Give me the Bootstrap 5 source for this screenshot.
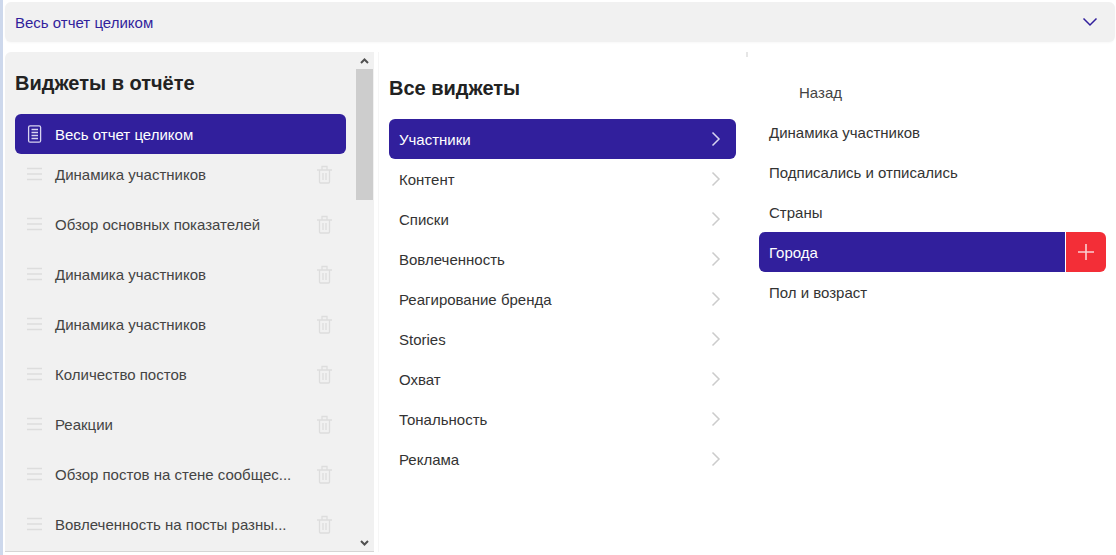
<!DOCTYPE html>
<html lang="ru">
<head>
<meta charset="utf-8">
<title>Виджеты</title>
<link href="https://cdn.jsdelivr.net/npm/bootstrap@5.3.0/dist/css/bootstrap.min.css" rel="stylesheet">
<style>
html,body{height:555px;overflow:hidden;background:#fff}
body{font-family:"Liberation Sans",Arial,sans-serif;font-size:15px;color:#333}
.edge-strip{width:3px;background:#cdd8ec;flex:none}
.page-main{padding:2px 1px 3px 2px;min-width:0}
.top-select{height:40px;background:#f1f1f1;border-radius:6px;padding:0 17px 0 10px;color:#311f9c;box-shadow:0 1px 2px rgba(0,0,0,.03)}
.columns{margin-top:10px;height:500px}
.report-panel{width:369px;flex:none;background:#f1f1f1;border-radius:6px 0 0 0;border-bottom:1px solid #d5d5d5;overflow:hidden}
.report-body{padding:19px 10px 0;min-width:0}
.fake-scroll{width:17px;flex:none;background:#f1f1f1;margin-right:1px}
.fake-arrow{height:17px}
.fake-thumb{height:131px;background:#cdcdcd}
.col-title{font-size:20px;font-weight:700;color:#222;line-height:24px;margin:0}
.report-title{margin-bottom:19px}
.middle-title{margin-bottom:19px}
.report-row{height:40px;margin-bottom:10px;padding:0 13px 0 12px;color:#444}
.report-row.is-active{background:#311f9c;color:#fff;border-radius:6px;margin-bottom:0}
.row-label{margin-left:12px;white-space:nowrap;padding-top:2px}
.row-trash{margin-left:auto}
.row-icon{width:16px;flex:none}
.middle-col{width:370px;flex:none;margin-left:4px;padding:24px 12px 0 10px;border-left:1px solid #f6f6f6}
.right-col{flex:1;padding:20px 9px 0 11px;min-width:0;position:relative}
.right-col::before{content:"";position:absolute;left:-2px;top:0;width:2px;height:5px;background:#e6e6e6}
.pick-row{height:40px;padding:0 15px 0 10px;color:#333;border-radius:6px}
.pick-row.is-active{background:#311f9c;color:#fff}
.pick-text{padding-top:2px}
.back-row{padding-left:40px;color:#444}
.pick-active{border-radius:6px;overflow:hidden;height:40px}
.pick-active .pick-row{flex:1;background:#311f9c;color:#fff;border-radius:0}
.pick-add{width:40px;margin-left:1px;background:#f32e37}
</style>
</head>
<body class="d-flex">
<div class="edge-strip"></div>
<div class="page-main flex-grow-1">
  <div class="top-select d-flex align-items-center justify-content-between">
    <span class="pick-text">Весь отчет целиком</span>
    <svg width="16" height="10" viewBox="0 0 16 10" fill="none" stroke="#311f9c" stroke-width="1.5"><path d="M1.500 1.500 8 8l6.500-6.500"/></svg>
  </div>
  <div class="columns d-flex">
    <div class="report-panel d-flex">
      <div class="report-body flex-grow-1">
        <h2 class="col-title report-title">Виджеты в отчёте</h2>
        <div class="report-row is-active d-flex align-items-center">
          <svg class="row-icon" width="16" height="18" viewBox="0 0 16 18" fill="none" stroke="#d8d4f0" stroke-width="1.300"><rect x="1.600" y="0.800" width="12" height="16.400" rx="1.500"/><path d="M4.500 4.500h6.500M4.500 7.500h6.500M4.500 10.500h6.500M4.500 13.500h6.500"/></svg>
          <span class="row-label">Весь отчет целиком</span>
        </div>
        <div class="report-row d-flex align-items-center"><svg class="row-icon" width="16" height="14" viewBox="0 0 16 14" fill="none" stroke="#ddd" stroke-width="1.600"><path d="M0 1.500h15M0 7h15M0 12.500h15"/></svg><span class="row-label">Динамика участников</span><svg class="row-trash" width="16" height="19" viewBox="0 0 16 19" fill="none" stroke="#ddd" stroke-width="1.300"><path d="M0 5h15M5 5V1.500h5V5M2.500 5v12a1 1 0 0 0 1 1h8a1 1 0 0 0 1-1V5M6 8v7M9 8v7"/></svg></div>
        <div class="report-row d-flex align-items-center"><svg class="row-icon" width="16" height="14" viewBox="0 0 16 14" fill="none" stroke="#ddd" stroke-width="1.600"><path d="M0 1.500h15M0 7h15M0 12.500h15"/></svg><span class="row-label">Обзор основных показателей</span><svg class="row-trash" width="16" height="19" viewBox="0 0 16 19" fill="none" stroke="#ddd" stroke-width="1.300"><path d="M0 5h15M5 5V1.500h5V5M2.500 5v12a1 1 0 0 0 1 1h8a1 1 0 0 0 1-1V5M6 8v7M9 8v7"/></svg></div>
        <div class="report-row d-flex align-items-center"><svg class="row-icon" width="16" height="14" viewBox="0 0 16 14" fill="none" stroke="#ddd" stroke-width="1.600"><path d="M0 1.500h15M0 7h15M0 12.500h15"/></svg><span class="row-label">Динамика участников</span><svg class="row-trash" width="16" height="19" viewBox="0 0 16 19" fill="none" stroke="#ddd" stroke-width="1.300"><path d="M0 5h15M5 5V1.500h5V5M2.500 5v12a1 1 0 0 0 1 1h8a1 1 0 0 0 1-1V5M6 8v7M9 8v7"/></svg></div>
        <div class="report-row d-flex align-items-center"><svg class="row-icon" width="16" height="14" viewBox="0 0 16 14" fill="none" stroke="#ddd" stroke-width="1.600"><path d="M0 1.500h15M0 7h15M0 12.500h15"/></svg><span class="row-label">Динамика участников</span><svg class="row-trash" width="16" height="19" viewBox="0 0 16 19" fill="none" stroke="#ddd" stroke-width="1.300"><path d="M0 5h15M5 5V1.500h5V5M2.500 5v12a1 1 0 0 0 1 1h8a1 1 0 0 0 1-1V5M6 8v7M9 8v7"/></svg></div>
        <div class="report-row d-flex align-items-center"><svg class="row-icon" width="16" height="14" viewBox="0 0 16 14" fill="none" stroke="#ddd" stroke-width="1.600"><path d="M0 1.500h15M0 7h15M0 12.500h15"/></svg><span class="row-label">Количество постов</span><svg class="row-trash" width="16" height="19" viewBox="0 0 16 19" fill="none" stroke="#ddd" stroke-width="1.300"><path d="M0 5h15M5 5V1.500h5V5M2.500 5v12a1 1 0 0 0 1 1h8a1 1 0 0 0 1-1V5M6 8v7M9 8v7"/></svg></div>
        <div class="report-row d-flex align-items-center"><svg class="row-icon" width="16" height="14" viewBox="0 0 16 14" fill="none" stroke="#ddd" stroke-width="1.600"><path d="M0 1.500h15M0 7h15M0 12.500h15"/></svg><span class="row-label">Реакции</span><svg class="row-trash" width="16" height="19" viewBox="0 0 16 19" fill="none" stroke="#ddd" stroke-width="1.300"><path d="M0 5h15M5 5V1.500h5V5M2.500 5v12a1 1 0 0 0 1 1h8a1 1 0 0 0 1-1V5M6 8v7M9 8v7"/></svg></div>
        <div class="report-row d-flex align-items-center"><svg class="row-icon" width="16" height="14" viewBox="0 0 16 14" fill="none" stroke="#ddd" stroke-width="1.600"><path d="M0 1.500h15M0 7h15M0 12.500h15"/></svg><span class="row-label">Обзор постов на стене сообщес...</span><svg class="row-trash" width="16" height="19" viewBox="0 0 16 19" fill="none" stroke="#ddd" stroke-width="1.300"><path d="M0 5h15M5 5V1.500h5V5M2.500 5v12a1 1 0 0 0 1 1h8a1 1 0 0 0 1-1V5M6 8v7M9 8v7"/></svg></div>
        <div class="report-row d-flex align-items-center"><svg class="row-icon" width="16" height="14" viewBox="0 0 16 14" fill="none" stroke="#ddd" stroke-width="1.600"><path d="M0 1.500h15M0 7h15M0 12.500h15"/></svg><span class="row-label">Вовлеченность на посты разны...</span><svg class="row-trash" width="16" height="19" viewBox="0 0 16 19" fill="none" stroke="#ddd" stroke-width="1.300"><path d="M0 5h15M5 5V1.500h5V5M2.500 5v12a1 1 0 0 0 1 1h8a1 1 0 0 0 1-1V5M6 8v7M9 8v7"/></svg></div>
      </div>
      <div class="fake-scroll d-flex flex-column justify-content-start">
        <div class="fake-arrow d-flex align-items-center justify-content-center"><svg width="9" height="6" viewBox="0 0 9 6" fill="none" stroke="#505050" stroke-width="2"><path d="M1 5 4.500 1.500 8 5"/></svg></div>
        <div class="fake-thumb"></div>
        <div class="flex-grow-1"></div>
        <div class="fake-arrow d-flex align-items-center justify-content-center"><svg width="9" height="6" viewBox="0 0 9 6" fill="none" stroke="#505050" stroke-width="2"><path d="M1 1 4.500 4.500 8 1"/></svg></div>
      </div>
    </div>
    <div class="middle-col">
      <h2 class="col-title middle-title">Все виджеты</h2>
      <div class="pick-row is-active d-flex align-items-center justify-content-between"><span class="pick-text">Участники</span><svg width="10" height="16" viewBox="0 0 10 16" fill="none" stroke="#d8d4f0" stroke-width="1.500"><path d="M1.500 1.500 8 8l-6.500 6.500"/></svg></div>
      <div class="pick-row d-flex align-items-center justify-content-between"><span class="pick-text">Контент</span><svg width="10" height="16" viewBox="0 0 10 16" fill="none" stroke="#ccc" stroke-width="1.500"><path d="M1.500 1.500 8 8l-6.500 6.500"/></svg></div>
      <div class="pick-row d-flex align-items-center justify-content-between"><span class="pick-text">Списки</span><svg width="10" height="16" viewBox="0 0 10 16" fill="none" stroke="#ccc" stroke-width="1.500"><path d="M1.500 1.500 8 8l-6.500 6.500"/></svg></div>
      <div class="pick-row d-flex align-items-center justify-content-between"><span class="pick-text">Вовлеченность</span><svg width="10" height="16" viewBox="0 0 10 16" fill="none" stroke="#ccc" stroke-width="1.500"><path d="M1.500 1.500 8 8l-6.500 6.500"/></svg></div>
      <div class="pick-row d-flex align-items-center justify-content-between"><span class="pick-text">Реагирование бренда</span><svg width="10" height="16" viewBox="0 0 10 16" fill="none" stroke="#ccc" stroke-width="1.500"><path d="M1.500 1.500 8 8l-6.500 6.500"/></svg></div>
      <div class="pick-row d-flex align-items-center justify-content-between"><span class="pick-text">Stories</span><svg width="10" height="16" viewBox="0 0 10 16" fill="none" stroke="#ccc" stroke-width="1.500"><path d="M1.500 1.500 8 8l-6.500 6.500"/></svg></div>
      <div class="pick-row d-flex align-items-center justify-content-between"><span class="pick-text">Охват</span><svg width="10" height="16" viewBox="0 0 10 16" fill="none" stroke="#ccc" stroke-width="1.500"><path d="M1.500 1.500 8 8l-6.500 6.500"/></svg></div>
      <div class="pick-row d-flex align-items-center justify-content-between"><span class="pick-text">Тональность</span><svg width="10" height="16" viewBox="0 0 10 16" fill="none" stroke="#ccc" stroke-width="1.500"><path d="M1.500 1.500 8 8l-6.500 6.500"/></svg></div>
      <div class="pick-row d-flex align-items-center justify-content-between"><span class="pick-text">Реклама</span><svg width="10" height="16" viewBox="0 0 10 16" fill="none" stroke="#ccc" stroke-width="1.500"><path d="M1.500 1.500 8 8l-6.500 6.500"/></svg></div>
    </div>
    <div class="right-col">
      <div class="pick-row back-row d-flex align-items-center"><span class="pick-text">Назад</span></div>
      <div class="pick-row d-flex align-items-center"><span class="pick-text">Динамика участников</span></div>
      <div class="pick-row d-flex align-items-center"><span class="pick-text">Подписались и отписались</span></div>
      <div class="pick-row d-flex align-items-center"><span class="pick-text">Страны</span></div>
      <div class="pick-active d-flex">
        <div class="pick-row d-flex align-items-center"><span class="pick-text">Города</span></div>
        <div class="pick-add d-flex align-items-center justify-content-center"><svg width="16" height="16" viewBox="0 0 16 16" fill="none" stroke="#fbd0d2" stroke-width="1.600"><path d="M8 0v16M0 8h16"/></svg></div>
      </div>
      <div class="pick-row d-flex align-items-center"><span class="pick-text">Пол и возраст</span></div>
    </div>
  </div>
</div>
<script src="https://cdn.jsdelivr.net/npm/bootstrap@5.3.0/dist/js/bootstrap.bundle.min.js"></script>
</body>
</html>
